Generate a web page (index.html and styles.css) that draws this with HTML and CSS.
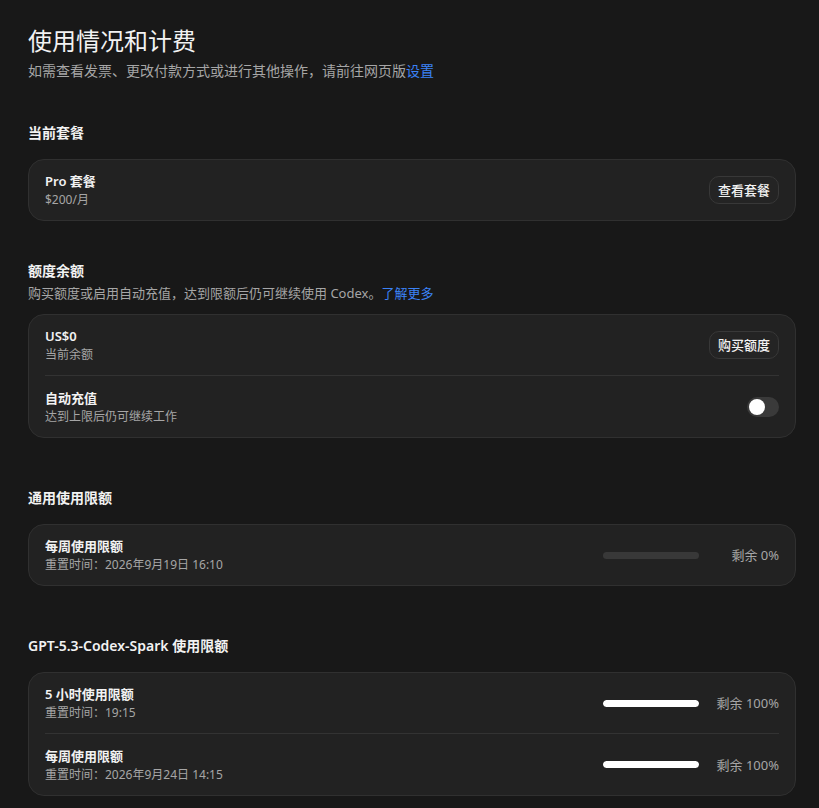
FILE: index.html
```html
<!DOCTYPE html>
<html lang="zh-CN">
<head>
<meta charset="utf-8">
<title>使用情况和计费</title>
<link rel="stylesheet" href="styles.css">
</head>
<body>
<main class="page">
  <header class="page-header">
    <h1 class="page-title">使用情况和计费</h1>
    <p class="page-sub">如需查看发票、更改付款方式或进行其他操作，请前往网页版<a class="link" href="#">设置</a></p>
  </header>

  <section class="section section-first">
    <h2 class="section-title">当前套餐</h2>
    <div class="card">
      <div class="row">
        <div class="row-text">
          <div class="row-title">Pro 套餐</div>
          <div class="row-sub">$200/月</div>
        </div>
        <button class="btn">查看套餐</button>
      </div>
    </div>
  </section>

  <section class="section section-credit">
    <h2 class="section-title">额度余额</h2>
    <p class="section-desc">购买额度或启用自动充值，达到限额后仍可继续使用 Codex。<a class="link" href="#">了解更多</a></p>
    <div class="card card-tight">
      <div class="row">
        <div class="row-text">
          <div class="row-title">US$0</div>
          <div class="row-sub">当前余额</div>
        </div>
        <button class="btn">购买额度</button>
      </div>
      <div class="row">
        <div class="row-text">
          <div class="row-title">自动充值</div>
          <div class="row-sub">达到上限后仍可继续工作</div>
        </div>
        <span class="toggle"><span class="knob"></span></span>
      </div>
    </div>
  </section>

  <section class="section section-limits">
    <h2 class="section-title">通用使用限额</h2>
    <div class="card">
      <div class="row">
        <div class="row-text">
          <div class="row-title">每周使用限额</div>
          <div class="row-sub">重置时间：2026年9月19日 16:10</div>
        </div>
        <div class="meter">
          <div class="bar"><div class="fill" style="width:0%"></div></div>
          <span class="meter-label">剩余 0%</span>
        </div>
      </div>
    </div>
  </section>

  <section class="section section-limits">
    <h2 class="section-title">GPT-5.3-Codex-Spark 使用限额</h2>
    <div class="card">
      <div class="row">
        <div class="row-text">
          <div class="row-title">5 小时使用限额</div>
          <div class="row-sub">重置时间：19:15</div>
        </div>
        <div class="meter">
          <div class="bar"><div class="fill" style="width:100%"></div></div>
          <span class="meter-label">剩余 100%</span>
        </div>
      </div>
      <div class="row">
        <div class="row-text">
          <div class="row-title">每周使用限额</div>
          <div class="row-sub">重置时间：2026年9月24日 14:15</div>
        </div>
        <div class="meter">
          <div class="bar"><div class="fill" style="width:100%"></div></div>
          <span class="meter-label">剩余 100%</span>
        </div>
      </div>
    </div>
  </section>
</main>
</body>
</html>
```

FILE: styles.css
```css
* { box-sizing: border-box; }

html, body {
  margin: 0;
  background: #181818;
}

body {
  font-family: "Noto Sans", "Noto Sans CJK SC", sans-serif;
  color: #f2f2f2;
  -webkit-font-smoothing: antialiased;
}

.page {
  width: 796px;
  padding: 25px 0 0 28px;
}

.page-title {
  margin: 0;
  font-size: 24px;
  line-height: 32px;
  font-weight: 400;
  color: #f2f2f2;
}

.page-sub {
  margin: 4px 0 0;
  font-size: 14px;
  line-height: 20px;
  color: #a6a6a6;
}

.link {
  color: #3b82f6;
  text-decoration: none;
}

.section-first { margin-top: 42px; }
.section-credit { margin-top: 40px; }
.section-limits { margin-top: 50px; }

.section-title {
  margin: 0;
  font-size: 14px;
  line-height: 20px;
  font-weight: 600;
  color: #f2f2f2;
}

.section-desc {
  margin: 3px 0 0;
  font-size: 13px;
  line-height: 18px;
  color: #a6a6a6;
}

.card {
  margin-top: 16px;
  background: #222222;
  border: 1px solid #303030;
  border-radius: 16px;
  padding: 0 16px;
}

.section-desc + .card { margin-top: 12px; }

.row {
  display: flex;
  align-items: center;
  justify-content: space-between;
  padding: 11px 0;
  min-height: 60px;
}

.row + .row {
  border-top: 1px solid #333333;
  min-height: 62px;
}

.row-title {
  font-size: 13px;
  line-height: 20px;
  font-weight: 600;
  color: #f2f2f2;
}

.row-sub {
  font-size: 12px;
  line-height: 18px;
  color: #a6a6a6;
}

.btn {
  height: 28px;
  padding: 0 8px;
  border: 1px solid #383838;
  border-radius: 10px;
  background: #242424;
  color: #f2f2f2;
  font-family: inherit;
  font-size: 13px;
  font-weight: 500;
  line-height: 26px;
}

.toggle {
  display: flex;
  align-items: center;
  width: 32px;
  height: 20px;
  padding: 2px;
  border-radius: 10px;
  background: #3a3a3a;
}

.knob {
  width: 16px;
  height: 16px;
  border-radius: 50%;
  background: #ffffff;
}

.meter {
  display: flex;
  align-items: center;
  gap: 16px;
}

.bar {
  width: 96px;
  height: 7px;
  border-radius: 4px;
  background: #383838;
  overflow: hidden;
}

.fill {
  height: 100%;
  background: #ffffff;
  border-radius: 4px;
}

.meter-label {
  min-width: 64px;
  text-align: right;
  font-size: 13px;
  line-height: 18px;
  color: #a6a6a6;
}
```
